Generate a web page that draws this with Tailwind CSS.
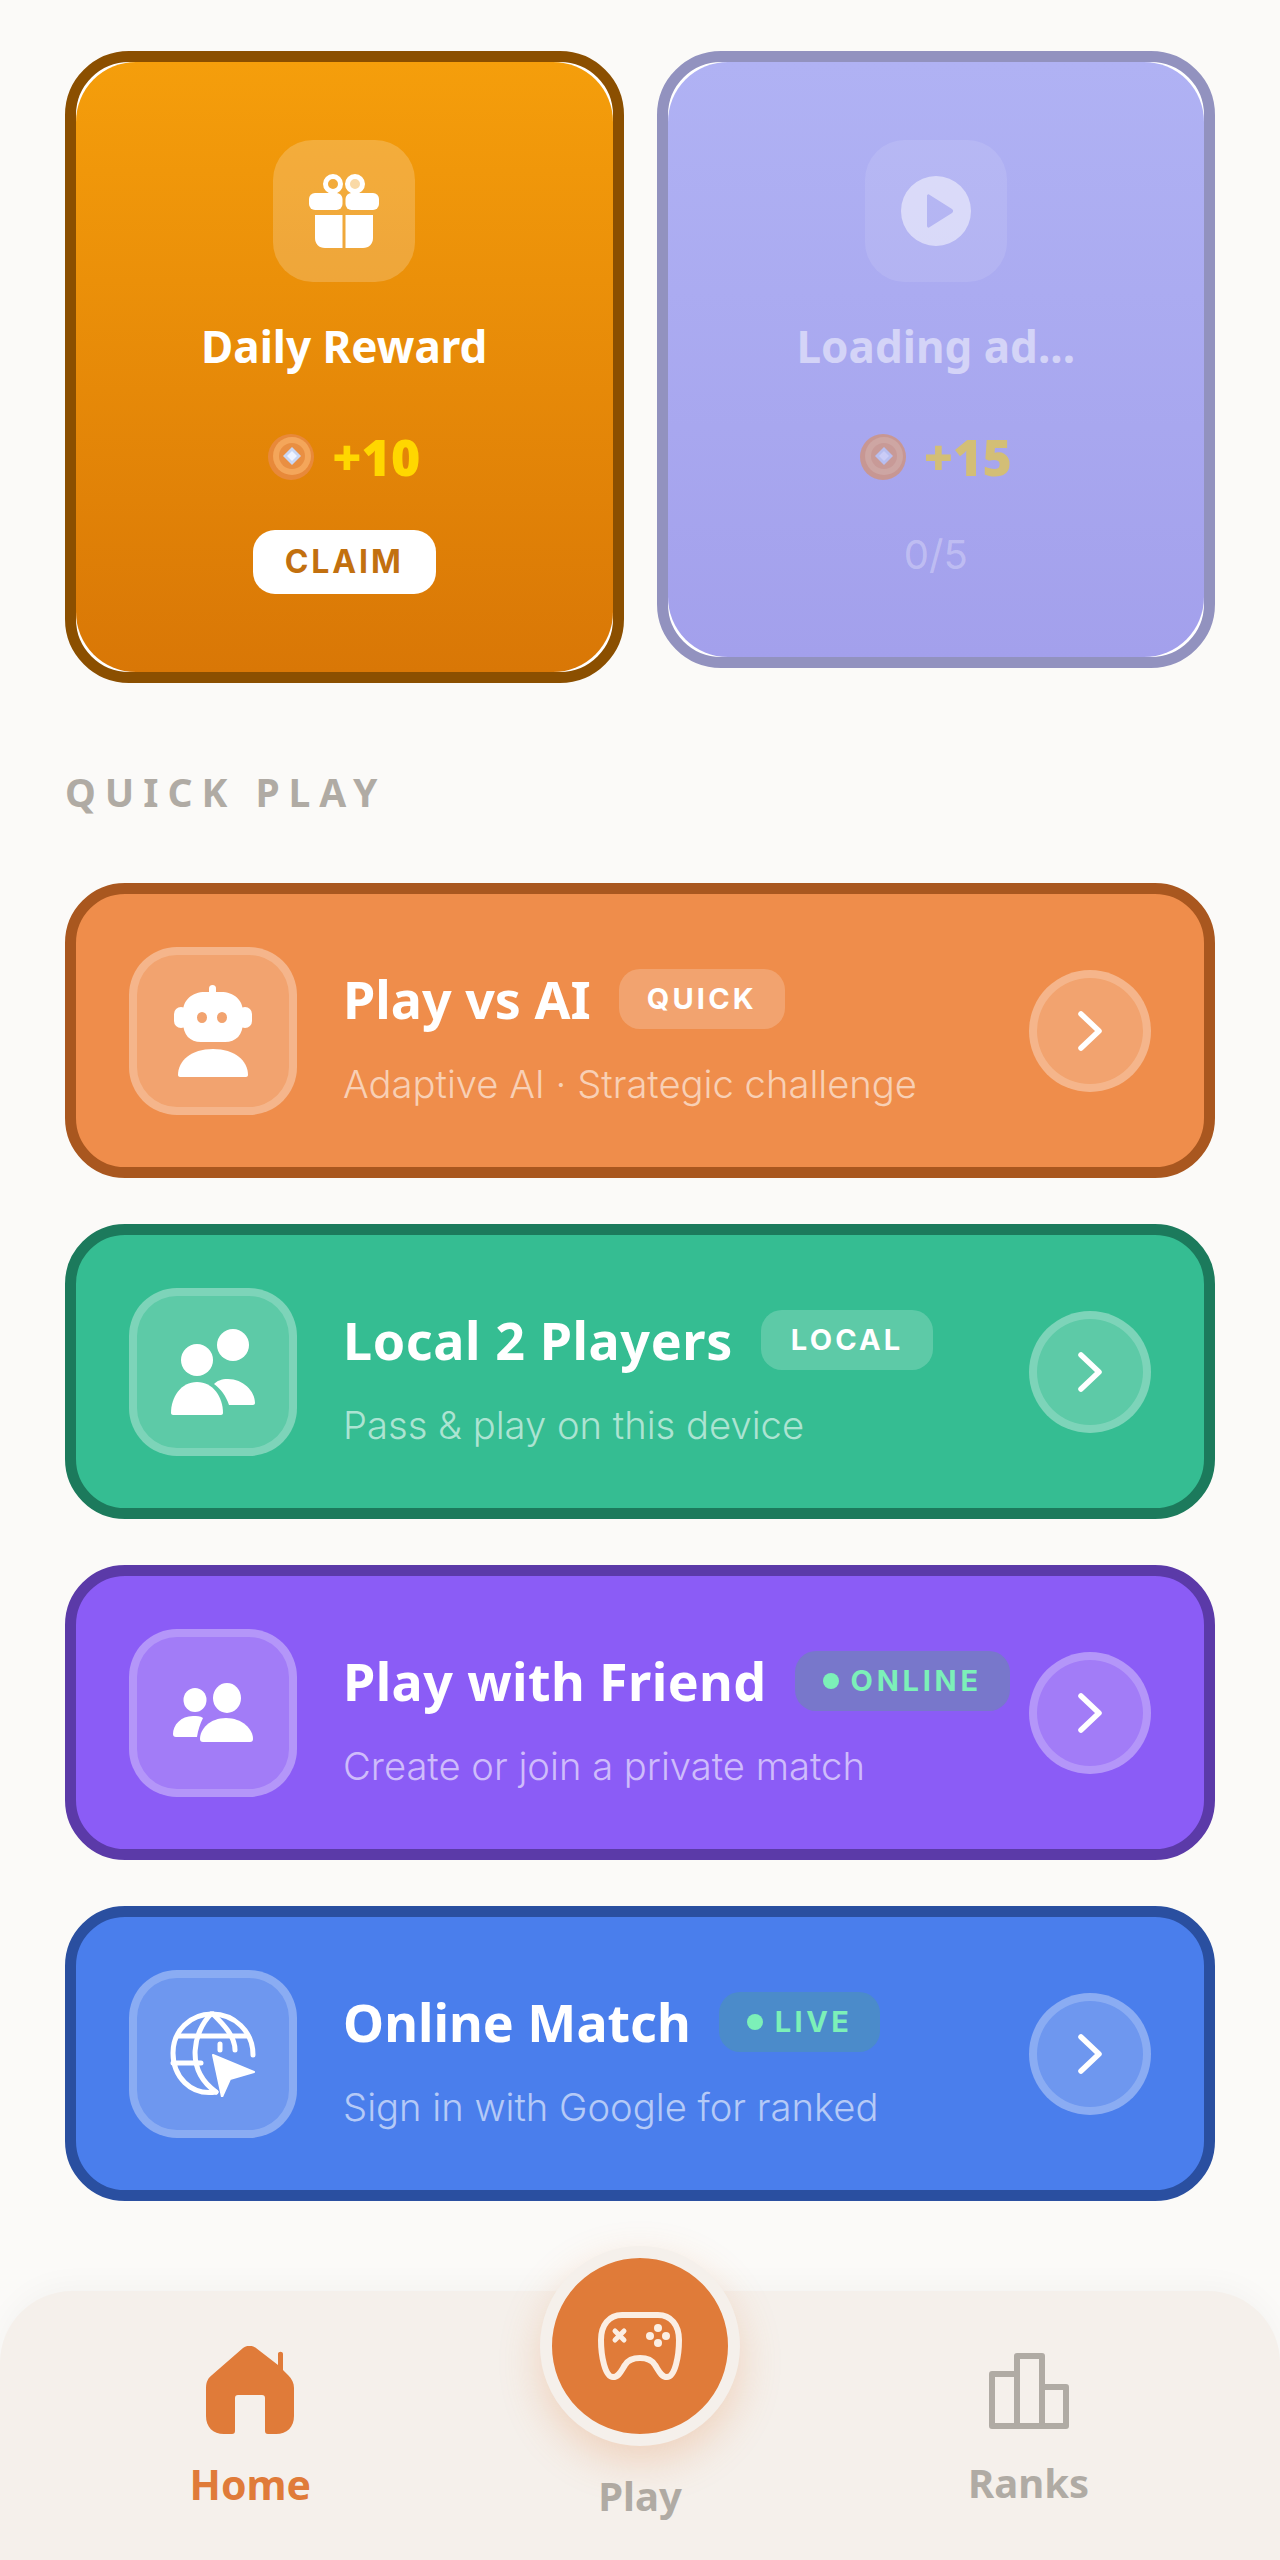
<!DOCTYPE html>
<html lang="en">
<head>
  <meta charset="UTF-8" />
  <meta name="viewport" content="width=device-width, initial-scale=1.0"/>
  <title>Home</title>
  <script src="https://cdn.jsdelivr.net/npm/@tailwindcss/browser@4"></script>
</head>
<body class="bg-[#fbfaf8] font-['Inter',sans-serif]">
<div class="h-[2560px] flex flex-col overflow-hidden">
  <main class="px-[65px] pt-[51px]">
    <!-- reward cards -->
    <div class="grid grid-cols-2 gap-[33px] items-start">
      <div class="border-[11px] border-[#8b4f00] bg-white rounded-[64px] overflow-hidden">
        <div class="h-[610px] rounded-[60px] bg-gradient-to-b from-[#f59e0b] to-[#d97706] flex flex-col items-center pt-[78px]">
          <div class="w-[142px] h-[142px] rounded-[40px] bg-white/20 flex items-center justify-center">
            <svg width="70" height="74" viewBox="0 0 70 74" fill="#fff">
              <circle cx="24" cy="10" r="7.500" fill="none" stroke="#fff" stroke-width="5"/>
              <circle cx="46" cy="10" r="7.500" fill="#fff" fill-opacity=".55" stroke="#fff" stroke-width="5"/>
              <rect x="0" y="19" width="33.500" height="17" rx="6"/><rect x="36.500" y="19" width="33.500" height="17" rx="6"/>
              <path d="M6 41h27.500v33H16C10 74 6 70 6 64zM36.500 41H64v23c0 6-4 10-10 10H36.500z"/>
            </svg>
          </div>
          <div class="mt-[36px] text-[44px] leading-[56px] font-bold text-white font-['Noto_Sans',sans-serif]">Daily Reward</div>
          <div class="mt-[53px] flex items-center gap-[18px] h-[60px]">
            <svg width="46" height="46" viewBox="0 0 46 46"><circle cx="23" cy="23" r="23" fill="#e8893a"/><circle cx="24" cy="22" r="19" fill="#f4a65a"/><circle cx="24" cy="22" r="13" fill="#e98f42"/><path d="M24 13l9 9-9 9-9-9z" fill="#c9d6f2"/><path d="M24 17l5 5-5 5-5-5z" fill="#eef3ff"/></svg>
            <span class="text-[50px] font-black text-[#ffd700] font-['Noto_Sans',sans-serif]">+10</span>
          </div>
          <button class="mt-[43px] w-[183px] h-[64px] rounded-[22px] bg-white text-[32px] font-bold tracking-[0.09em] text-[#c2700f]">CLAIM</button>
        </div>
      </div>
      <div class="border-[11px] border-[#9292bf] bg-white rounded-[64px] overflow-hidden">
        <div class="h-[595px] rounded-[60px] bg-gradient-to-b from-[#b0b2f4] to-[#a3a0ec] flex flex-col items-center pt-[78px]">
          <div class="w-[142px] h-[142px] rounded-[40px] bg-white/10 flex items-center justify-center">
            <svg width="70" height="70" viewBox="0 0 70 70" class="opacity-50"><path fill="#fff" fill-rule="evenodd" d="M35 0a35 35 0 1 0 0 70 35 35 0 0 0 0-70zM26 20c0-1 1-2 2-1.500L51 33c1.500 1 1.500 3 0 4L28 51.500c-1 .5-2-.5-2-1.500z"/></svg>
          </div>
          <div class="mt-[36px] text-[44px] leading-[56px] font-bold text-white/50 font-['Noto_Sans',sans-serif]">Loading ad...</div>
          <div class="mt-[53px] flex items-center gap-[18px] h-[60px] opacity-50">
            <svg width="46" height="46" viewBox="0 0 46 46"><circle cx="23" cy="23" r="23" fill="#e8893a"/><circle cx="24" cy="22" r="19" fill="#f4a65a"/><circle cx="24" cy="22" r="13" fill="#e98f42"/><path d="M24 13l9 9-9 9-9-9z" fill="#c9d6f2"/><path d="M24 17l5 5-5 5-5-5z" fill="#eef3ff"/></svg>
            <span class="text-[50px] font-black text-[#ffd700] font-['Noto_Sans',sans-serif]">+15</span>
          </div>
          <div class="mt-[46px] text-[40px] leading-[44px] text-white/30">0/5</div>
        </div>
      </div>
    </div>

    <h2 class="mt-[81px] h-[56px] text-[39px] leading-[56px] font-bold tracking-[0.23em] text-[#b0aba4] font-['Noto_Sans',sans-serif]">QUICK PLAY</h2>

    <!-- game modes -->
    <div class="mt-[63px] flex flex-col gap-[46px]">
      <div class="h-[295px] rounded-[60px] border-[11px] border-[#a9571f] bg-[#ef8d4b] flex items-center pl-[53px] pr-[53px]">
        <div class="w-[168px] h-[168px] shrink-0 rounded-[48px] border-[8px] border-white/20 bg-white/20 flex items-center justify-center">
          <svg width="78" height="92" viewBox="0 0 78 92" fill="#fff">
            <rect x="35" y="0" width="7" height="14" rx="3.500"/>
            <rect x="0" y="22" width="14" height="21" rx="7"/>
            <rect x="64" y="22" width="14" height="21" rx="7"/>
            <path fill-rule="evenodd" d="M31 7h16c13 0 22 8 22 20v10c0 13-7 20-18 20H27C16 57 9 50 9 37V27C9 15 18 7 31 7zM28 27a5 5.500 0 1 0 0 11 5 5.500 0 0 0 0-11zM48 27a5 5.500 0 1 0 0 11 5 5.500 0 0 0 0-11z"/>
            <path d="M39 64c22 0 35 12 35 26 0 1-1 2-2 2H6c-1 0-2-1-2-2 0-14 13-26 35-26z"/>
          </svg>
        </div>
        <div class="ml-[46px] pt-[14px] flex-1 min-w-0">
          <div class="flex items-center h-[60px] gap-[28px]">
            <span class="text-[52px] font-bold leading-[60px] text-white whitespace-nowrap font-['Noto_Sans',sans-serif]">Play vs AI</span>
            <span class="h-[60px] px-[28px] shrink-0 rounded-[21px] bg-white/20 flex items-center text-[29px] font-bold tracking-[0.11em] text-white">QUICK</span>
          </div>
          <div class="mt-[32px] text-[38.200px] leading-[46px] font-light whitespace-nowrap text-white/60">Adaptive AI · Strategic challenge</div>
        </div>
        <div class="w-[122px] h-[122px] shrink-0 rounded-full border-[8px] border-white/20 bg-white/20 flex items-center justify-center">
          <svg width="28" height="44" viewBox="0 0 28 44" fill="none" stroke="#fff" stroke-width="5.500" stroke-linecap="round" stroke-linejoin="round"><path d="M5 5l18 17L5 39"/></svg>
        </div>
      </div>

      <div class="h-[295px] rounded-[60px] border-[11px] border-[#1c7a5c] bg-[#35bd92] flex items-center pl-[53px] pr-[53px]">
        <div class="w-[168px] h-[168px] shrink-0 rounded-[48px] border-[8px] border-white/20 bg-white/20 flex items-center justify-center">
          <svg width="84" height="86" viewBox="0 0 84 86" fill="#fff">
            <ellipse cx="62" cy="16" rx="16" ry="16"/>
            <circle cx="26" cy="31" r="16"/>
            <path d="M43 55c3-3 7-5 14-5 15 0 27 12 27 24 0 1-1 2-2 2H58c-3-9-8-16-15-21z"/>
            <path d="M26 53c16 0 26 15 26 31 0 1-1 2-2 2H2c-1 0-2-1-2-2 0-16 10-31 26-31z"/>
          </svg>
        </div>
        <div class="ml-[46px] pt-[14px] flex-1 min-w-0">
          <div class="flex items-center h-[60px] gap-[28px]">
            <span class="text-[52px] font-bold leading-[60px] tracking-[0.6px] text-white whitespace-nowrap font-['Noto_Sans',sans-serif]">Local 2 Players</span>
            <span class="h-[60px] px-[30px] shrink-0 rounded-[21px] bg-white/20 flex items-center text-[29px] font-bold tracking-[0.11em] text-white">LOCAL</span>
          </div>
          <div class="mt-[32px] text-[38.200px] leading-[46px] font-light whitespace-nowrap text-white/60">Pass &amp; play on this device</div>
        </div>
        <div class="w-[122px] h-[122px] shrink-0 rounded-full border-[8px] border-white/20 bg-white/20 flex items-center justify-center">
          <svg width="28" height="44" viewBox="0 0 28 44" fill="none" stroke="#fff" stroke-width="5.500" stroke-linecap="round" stroke-linejoin="round"><path d="M5 5l18 17L5 39"/></svg>
        </div>
      </div>

      <div class="h-[295px] rounded-[60px] border-[11px] border-[#5b3aa8] bg-[#8b5cf6] flex items-center pl-[53px] pr-[53px]">
        <div class="w-[168px] h-[168px] shrink-0 rounded-[48px] border-[8px] border-white/20 bg-white/20 flex items-center justify-center">
          <svg width="80" height="59" viewBox="0 0 80 59" fill="#fff">
            <ellipse cx="22" cy="17" rx="11.500" ry="12"/>
            <ellipse cx="54" cy="15" rx="14" ry="15"/>
            <path d="M30 35c-3-2-6-2-10-2C8 33 0 42 0 51c0 2 1 3 3 3h21c1-7 3-13 6-19z"/>
            <path d="M53 35c16 0 27 11 27 21 0 2-1 3-3 3H30c-2 0-3-1-3-3 0-10 10-21 26-21z"/>
          </svg>
        </div>
        <div class="ml-[46px] pt-[14px] flex-1 min-w-0">
          <div class="flex items-center h-[60px] gap-[28px]">
            <span class="text-[52px] font-bold leading-[60px] tracking-[0.4px] text-white whitespace-nowrap font-['Noto_Sans',sans-serif]">Play with Friend</span>
            <span class="h-[60px] px-[28px] shrink-0 rounded-[21px] bg-[#7877cb] flex items-center gap-[12px] text-[29px] font-bold tracking-[0.13em] text-[#7cf0b8]"><i class="w-[16px] h-[16px] rounded-full bg-[#7cf0b8]"></i>ONLINE</span>
          </div>
          <div class="mt-[32px] text-[38.200px] leading-[46px] font-light whitespace-nowrap text-white/60">Create or join a private match</div>
        </div>
        <div class="w-[122px] h-[122px] shrink-0 rounded-full border-[8px] border-white/20 bg-white/20 flex items-center justify-center">
          <svg width="28" height="44" viewBox="0 0 28 44" fill="none" stroke="#fff" stroke-width="5.500" stroke-linecap="round" stroke-linejoin="round"><path d="M5 5l18 17L5 39"/></svg>
        </div>
      </div>

      <div class="h-[295px] rounded-[60px] border-[11px] border-[#2a4fa0] bg-[#4a7eec] flex items-center pl-[53px] pr-[53px]">
        <div class="w-[168px] h-[168px] shrink-0 rounded-[48px] border-[8px] border-white/20 bg-white/20 flex items-center justify-center">
          <svg width="86" height="86" viewBox="0 0 86 86" fill="none" stroke="#fff" stroke-width="5" stroke-linecap="round">
            <path d="M46 81C20 85 3 65 3 42 3 20 20 3 42 3c22 0 41 17 41 41"/>
            <path d="M41 3C24 20 14 58 46 81M43 3c10 10 22 22 22 36"/>
            <path d="M8 25h70M3 52h28M50 39V33"/>
            <path d="M43 44l41 17-24 7-8 18z" fill="#fff" stroke="#fff" stroke-width="2" stroke-linejoin="round"/>
          </svg>
        </div>
        <div class="ml-[46px] pt-[14px] flex-1 min-w-0">
          <div class="flex items-center h-[60px] gap-[28px]">
            <span class="text-[52px] font-bold leading-[60px] text-white whitespace-nowrap font-['Noto_Sans',sans-serif]">Online Match</span>
            <span class="h-[60px] px-[28px] shrink-0 rounded-[21px] bg-[#4b8bca] flex items-center gap-[12px] text-[29px] font-bold tracking-[0.12em] text-[#7cf0b8]"><i class="w-[16px] h-[16px] rounded-full bg-[#7cf0b8]"></i>LIVE</span>
          </div>
          <div class="mt-[32px] text-[38.200px] leading-[46px] font-light whitespace-nowrap text-white/60">Sign in with Google for ranked</div>
        </div>
        <div class="w-[122px] h-[122px] shrink-0 rounded-full border-[8px] border-white/20 bg-white/20 flex items-center justify-center">
          <svg width="28" height="44" viewBox="0 0 28 44" fill="none" stroke="#fff" stroke-width="5.500" stroke-linecap="round" stroke-linejoin="round"><path d="M5 5l18 17L5 39"/></svg>
        </div>
      </div>
    </div>
  </main>

  <!-- bottom nav -->
  <nav class="relative mt-auto h-[269px] rounded-t-[72px] bg-[#f5f0eb] shadow-[0_-6px_30px_rgba(0,0,0,0.03)] font-['Noto_Sans',sans-serif] font-bold text-[#b0aba4]">
    <div class="grid grid-cols-3 h-full">
      <div class="flex flex-col items-center pt-[55px] pl-[74px] text-[#e07b39]">
        <svg width="88" height="88" viewBox="0 0 88 88" fill="#e07b39"><path fill-rule="evenodd" d="M37 2c4-3 9-3 13 0l22 17V8c0-3 5-3 5 0v16l5 5c4 4 6 8 6 13v28c0 11-7 18-18 18H62c-2 0-3-1-3-3V52c0-2-1-3-3-3H32c-2 0-3 1-3 3v33c0 2-1 3-3 3h-8C7 88 0 81 0 70V42c0-6 2-10 6-13z"/></svg>
        <span class="mt-[24px] text-[41px] leading-[52px]">Home</span>
      </div>
      <div class="flex flex-col items-center justify-end pb-[40px]">
        <span class="text-[40px] leading-[48px]">Play</span>
      </div>
      <div class="flex flex-col items-center pt-[62px] pr-[76px]">
        <svg width="80" height="76" viewBox="0 0 80 76" fill="none" stroke="#b0aba4" stroke-width="6" stroke-linejoin="round"><path d="M3 21h25v52H3zM28 3h25v70H28zM53 34h24v39H53z"/></svg>
        <span class="mt-[29px] text-[40px] leading-[50px]">Ranks</span>
      </div>
    </div>
    <div class="absolute left-1/2 -translate-x-1/2 -top-[45px] w-[200px] h-[200px] rounded-full border-[12px] border-[#f5f0eb] bg-[#e07b39] flex items-center justify-center shadow-[0_16px_40px_rgba(224,123,57,0.25)]">
      <svg width="84" height="68" viewBox="0 0 84 68" fill="none" stroke="#fbeee3" stroke-width="6"><path d="M24 3H60C73 3 81 13 81 28 81 44 77 65 69 65 63 65 61 59 57 53 54 48 49 46 42 46 35 46 30 48 27 53 23 59 21 65 15 65 7 65 3 44 3 28 3 13 11 3 24 3Z"/><path d="M17 19l9 9m0-9l-9 9" stroke-linecap="round" stroke-width="5"/><g fill="#fbeee3" stroke="none"><circle cx="60" cy="16" r="4"/><circle cx="60" cy="31" r="4"/><circle cx="52" cy="24" r="4"/><circle cx="68" cy="24" r="4"/></g></svg>
    </div>
  </nav>
</div>
</body>
</html>
